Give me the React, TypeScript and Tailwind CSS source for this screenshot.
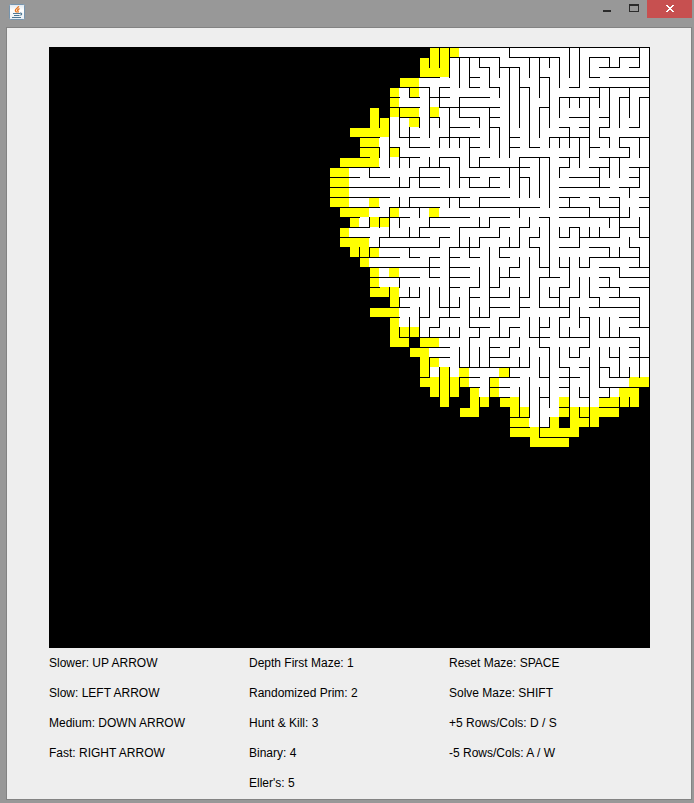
type Section = { col: number; row: number; h: string; v: string };

const GRID = 60;

// Visited cells of each row: "y" marks frontier ranges, "w" carved ranges.
const ROWS: string[] = [
  'y38-40 w41-59',
  'y37-39 w40-59',
  'y37-39 w40-59',
  'y35-36 w37-59',
  'y34-34 w35-35 y36-36 w37-59',
  'y34-34 w35-59',
  'y32-32 y34-36 w37-37 y38-38 w39-59',
  'y32-33 w34-35 y36-36 w37-59',
  'y30-33 w34-59',
  'y31-32 w33-59',
  'y31-32 w33-33 y34-34 w35-59',
  'y29-32 w33-59',
  'y28-29 w30-59',
  'y28-29 w30-59',
  'y28-29 w30-59',
  'y28-29 w30-31 y32-32 w33-59',
  'y29-31 w32-33 y34-34 w35-37 y38-38 w39-59',
  'y30-30 w31-31 y32-33 w34-59',
  'y29-29 w30-59',
  'y29-31 w32-59',
  'y30-32 w33-59',
  'y31-31 w32-59',
  'y32-32 w33-33 y34-34 w35-59',
  'y32-32 w33-59',
  'y32-34 w35-59',
  'y34-34 w35-59',
  'y32-34 w35-59',
  'y34-34 w35-59',
  'y34-36 w37-59',
  'y34-35 y37-38 w39-59',
  'y36-37 w38-59',
  'y37-38 w39-59',
  'y37-37 w38-38 y39-39 w40-40 y41-41 w42-44 y45-45 w46-59',
  'y37-41 w42-43 y44-44 w45-57 y58-59',
  'y38-40 y42-42 w43-43 y44-44 w45-56 y57-58',
  'y39-39 y42-43 y45-46 w47-50 y51-51 w52-54 y55-58',
  'y41-42 y46-47 w48-50 y51-56',
  'y46-47 w48-49 y50-50 y52-54',
  'y46-52',
  'y48-51',
];

// Walls in cells, relative to each section's corner: "line:from-to,from-to".
const SECTIONS: Section[] = [
  {
    col: 31,
    row: 0,
    h: '1:9-14 2:12-13,14-15 3:6-8,11-12 4:4-7,8-9,11-12,13-14 5:3-4,5-6,7-9,10-13 6:3-6,8-14 7:4-6,7-8,10-12,13-14 8:9-11,13-14 9:0-2,4-6,8-12 10:0-2,3-4,5-7,11-12',
    v: '2:7-8 3:6-10 4:6-9 5:4-5,8-10 6:7-8 7:0-2,4-9 8:0-2,4-6,7-8,9-10 9:0-3,6-10 10:1-4,5-7,9-10 11:1-4,9-10 12:1-2,7-8 13:2-4,6-10 14:1-3,4-5,8-10',
  },
  {
    col: 46,
    row: 0,
    h: '1:0-5,8-10,11-13 2:-1-1,9-11,12-13 3:3-4,8-9,10-14 4:1-2,6-7,8-14 5:5-9,11-12,13-14 6:3-4 7:6-8,9-10 8:5-6,7-8,9-10,12-13 9:0-1,4-8,9-10,11-14 10:0-1,2-3,8-9,11-12',
    v: '0:0-1,2-10 1:2-8 2:1-3,4-10 3:1-5,6-9 4:1-2,3-8,9-10 5:1-4,5-7,9-10 6:0-3,5-6,8-10 7:0-4,5-6,9-10 8:1-3,5-10 9:4-6,8-9 10:1-2,4-8,9-10 11:1-2,5-8,9-10 12:4-7 13:0-2,5-8,9-10',
  },
  {
    col: 28,
    row: 10,
    h: '1:3-4,7-9,11-13,15-16 2:1-5,9-12,14-16 3:0-3,4-6,8-11,13-15 4:0-8,9-11,14-16 5:0-6,8-14,15-16 6:1-5,6-11,13-16 7:2-3,5-8,10-14 8:2-4,9-12,13-16 9:1-4,5-10,11-12,15-16 10:4-11,12-15',
    v: '3:10-11 4:2-3,7-8 5:0-1,7-8,9-10 6:0-2,6-9 7:0-2,3-4,5-6,7-8 8:1-2,3-4,5-6,8-9 9:2-4,6-7,8-9 10:1-2,7-8 11:1-2,9-10 12:2-4,5-6 13:1-4,5-6,8-10 14:0-2,3-4,9-10 15:1-2,5-6,7-8,9-10',
  },
  {
    col: 44,
    row: 10,
    h: '1:3-6,7-9,11-14 2:0-4,7-8,10-12,14-16 3:0-1,3-4,8-11,14-15 4:0-1,7-12,13-15 5:0-2,7-9,10-11,12-13,15-16 6:0-5,7-10,11-13,15-16 7:0-2,5-6,7-14 8:1-2,3-4,8-9,13-15 9:0-1,4-5,7-8,9-13,15-16 10:1-3,4-5,7-9,10-12,14-15',
    v: '0:3-4,7-8 1:0-1,8-9 2:0-1,2-4,9-10 3:1-5,6-7,8-10 4:3-5,7-8,9-10 5:1-5,8-9 6:1-6,7-10 7:2-3,8-9 8:1-2,5-6,8-9 9:0-2,8-10 10:0-1,6-7,8-9 11:2-4,5-6,8-9 12:1-3,7-8 13:1-3,5-9 14:0-1,4-5,6-7,9-10 15:0-1,2-4,7-9',
  },
  {
    col: 31,
    row: 20,
    h: '1:0-4,5-6,7-8,9-10,11-12,14-15 2:1-8,9-11 3:1-6,7-8,9-11,14-15 4:1-2,9-10,11-12,13-14 5:4-6,11-12,13-15 6:3-5,8-10,13-15 7:3-4,6-7,8-10,11-13,14-15 8:7-8,11-13 9:4-5,6-10,11-12,13-15',
    v: '1:0-1 3:4-5 4:3-4,5-6,8-9 5:0-1,4-5,7-9 6:4-5,6-9 7:1-3,4-7,8-9 8:4-6,7-8 9:0-7,8-9 10:5-6,8-9 11:0-1,4-8,9-10 12:2-4,6-7,8-9 13:0-7,9-10 14:0-1,2-4,7-9',
  },
  {
    col: 46,
    row: 20,
    h: '1:8-13 2:0-1,3-4,5-6,7-8,9-11,12-14 3:0-1,3-5,9-10,11-14 4:5-6,9-11,12-14 5:1-2,4-5,6-7,8-9,10-13 6:1-2,3-6,8-13 7:0-1,5-6,7-8,11-13 8:0-1,3-4,12-14 9:2-4,5-8,9-13 10:0-1,3-4,7-8,12-13',
    v: '0:2-3,4-5,8-9 1:1-2,4-7,9-10 2:1-5,7-9 3:0-2,3-6,7-10 4:0-3,4-5,7-8 5:1-2,4-6,7-9 6:1-4,5-7,8-9 7:1-2,3-5,6-8 8:1-2,3-5,7-10 9:5-6,7-9 10:0-1,3-4,7-9 11:0-1,2-3,4-5,8-9 13:0-2,5-8,9-10',
  },
  {
    col: 36,
    row: 30,
    h: '0:1-4,8-9 1:2-4,8-10 2:5-12 3:1-2,5-7,8-11 4:6-7,8-10 5:9-10 7:10-12 8:10-12',
    v: '2:1-3 3:2-5 4:2-5 5:0-2,3-4 6:0-2 7:0-2,5-6 8:0-2,3-5 10:0-1,2-3 11:1-2,4-7',
  },
  {
    col: 48,
    row: 30,
    h: '1:4-5,8-9,10-12 2:3-4,5-6,7-8 3:1-2,3-5,8-10 4:3-4,7-12 5:1-2,5-6,7-8 6:3-4,7-9 7:5-6 8:1-2,3-4 9:1-4',
    v: '0:0-2,3-7 1:1-3,4-9 2:0-6,7-8 3:0-2 4:0-1,2-7 5:0-1,4-5,6-7 6:1-8 7:0-4 8:0-1,2-3,4-5 9:0-3,5-6 10:2-3,5-6 11:0-3',
  },
];

const ranges = (list: string) =>
  list.split(',').map((r) => {
    const dash = r.lastIndexOf('-');
    return [Number(r.slice(0, dash)), Number(r.slice(dash + 1))];
  });

const cells = ROWS.flatMap((line, row) =>
  line.split(' ').map((part) => {
    const [from, to] = part.slice(1).split('-').map(Number);
    return { row, from, to, frontier: part[0] === 'y' };
  }),
);

const visited = (row: number, col: number) =>
  cells.some((c) => c.row === row && col >= c.from && col <= c.to);

function wallPath() {
  let d = '';
  for (const s of SECTIONS) {
    for (const item of s.h.split(' ')) {
      const [line, list] = item.split(':');
      for (const [a, b] of ranges(list)) d += `M${s.col + a} ${s.row + Number(line)}H${s.col + b}`;
    }
    for (const item of s.v.split(' ')) {
      const [line, list] = item.split(':');
      for (const [a, b] of ranges(list)) d += `M${s.col + Number(line)} ${s.row + a}V${s.row + b}`;
    }
  }
  // Every edge between a visited and an unvisited cell is a wall.
  for (let r = 0; r <= ROWS.length; r++) {
    for (let c = 0; c < GRID; c++) {
      if (visited(r, c) !== visited(r - 1, c)) d += `M${c} ${r}h1`;
      if (visited(r, c) !== visited(r, c - 1)) d += `M${c} ${r}v1`;
    }
  }
  return d + `M0 0H${GRID}V${GRID}H0Z`;
}

const WALLS = wallPath();

function Maze() {
  return (
    <svg width="601" height="601" viewBox="0 0 601 601" className="block shrink-0 bg-black" shapeRendering="crispEdges" role="img" aria-label="Maze">
      {cells.map((c) => (
        <rect
          key={`${c.row}-${c.from}`}
          x={c.from * 10}
          y={c.row * 10}
          width={(c.to - c.from + 1) * 10}
          height={10}
          fill={c.frontier ? '#ffff00' : '#ffffff'}
        />
      ))}
      <path d={WALLS} transform="translate(.5 .5) scale(10)" fill="none" stroke="#000" strokeWidth=".1" strokeLinecap="square" />
    </svg>
  );
}

const HELP = [
  ['Slower: UP ARROW', 'Slow: LEFT ARROW', 'Medium: DOWN ARROW', 'Fast: RIGHT ARROW'],
  ['Depth First Maze: 1', 'Randomized Prim: 2', 'Hunt & Kill: 3', 'Binary: 4', "Eller's: 5"],
  ['Reset Maze: SPACE', 'Solve Maze: SHIFT', '+5 Rows/Cols: D / S', '-5 Rows/Cols: A / W'],
];

function JavaIcon() {
  return (
    <svg width="16" height="16" viewBox="0 0 16 16" aria-hidden="true">
      <defs>
        <linearGradient id="tile" x1="0" y1="0" x2="0" y2="1">
          <stop offset="0" stopColor="#dfe7ee" />
          <stop offset=".4" stopColor="#fff" />
          <stop offset="1" stopColor="#e6edf3" />
        </linearGradient>
      </defs>
      <rect x=".5" y=".5" width="15" height="15" rx="1" fill="url(#tile)" stroke="#7694ad" />
      <path d="M9.6 2.2C9.8 4 6.2 4.6 6.4 6.4c.1.9 1 1.3 1 2.1M10.6 4.6C8.4 5.4 8.4 6.4 9 7.2c.3.5 0 1-.5 1.300" fill="none" stroke="#e8761f" strokeWidth="1.4" />
      <path d="M4 9.500h7M5 11.500h5.500M3 13.500h9M11 9.200c2-.5 2.400 1.300.3 2" fill="none" stroke="#4d7896" strokeWidth="1.2" />
    </svg>
  );
}

export default function App() {
  return (
    <div className="flex min-h-screen flex-col bg-[#989898] pr-[2px] pb-[3px] pl-[6px] font-['Liberation_Sans',Arial,sans-serif] text-black">
      <header className="flex h-[27px] items-start justify-between pl-[3px]">
        <div className="pt-1">
          <JavaIcon />
        </div>
        <div className="flex h-[18px]">
          <button type="button" aria-label="Minimize" className="flex w-[26px] items-center justify-center">
            <svg width="8" height="18" shapeRendering="crispEdges">
              <path d="M0 10h8v2H0z" fill="#2b2b2b" />
            </svg>
          </button>
          <button type="button" aria-label="Maximize" className="flex w-[27px] items-center justify-center">
            <svg width="10" height="18" shapeRendering="crispEdges">
              <path fillRule="evenodd" d="M0 4h10v8H0zM1 6v5h8V6z" fill="#2b2b2b" />
            </svg>
          </button>
          <button type="button" aria-label="Close" className="flex w-[45px] items-center justify-center bg-[#c75050]">
            <svg width="8" height="18" shapeRendering="crispEdges">
              <path d="M0 5h2v1h1v1h2V6h1V5h2v1H7v1H6v1H5v1h1v1h1v1h1v1H6v-1H5v-1H3v1H2v1H0v-1h1v-1h1V9h1V8H2V7H1V6H0z" fill="#fff" />
            </svg>
          </button>
        </div>
      </header>
      <main className="grow border border-[#838383] bg-[#eeeeee] pt-[19px] pl-[42px]">
        <Maze />
        <div className="grid grid-cols-[200px_200px_1fr] text-[12px] leading-[30px]">
          {HELP.map((column) => (
            <ul key={column[0]}>
              {column.map((line) => (
                <li key={line}>{line}</li>
              ))}
            </ul>
          ))}
        </div>
      </main>
    </div>
  );
}
